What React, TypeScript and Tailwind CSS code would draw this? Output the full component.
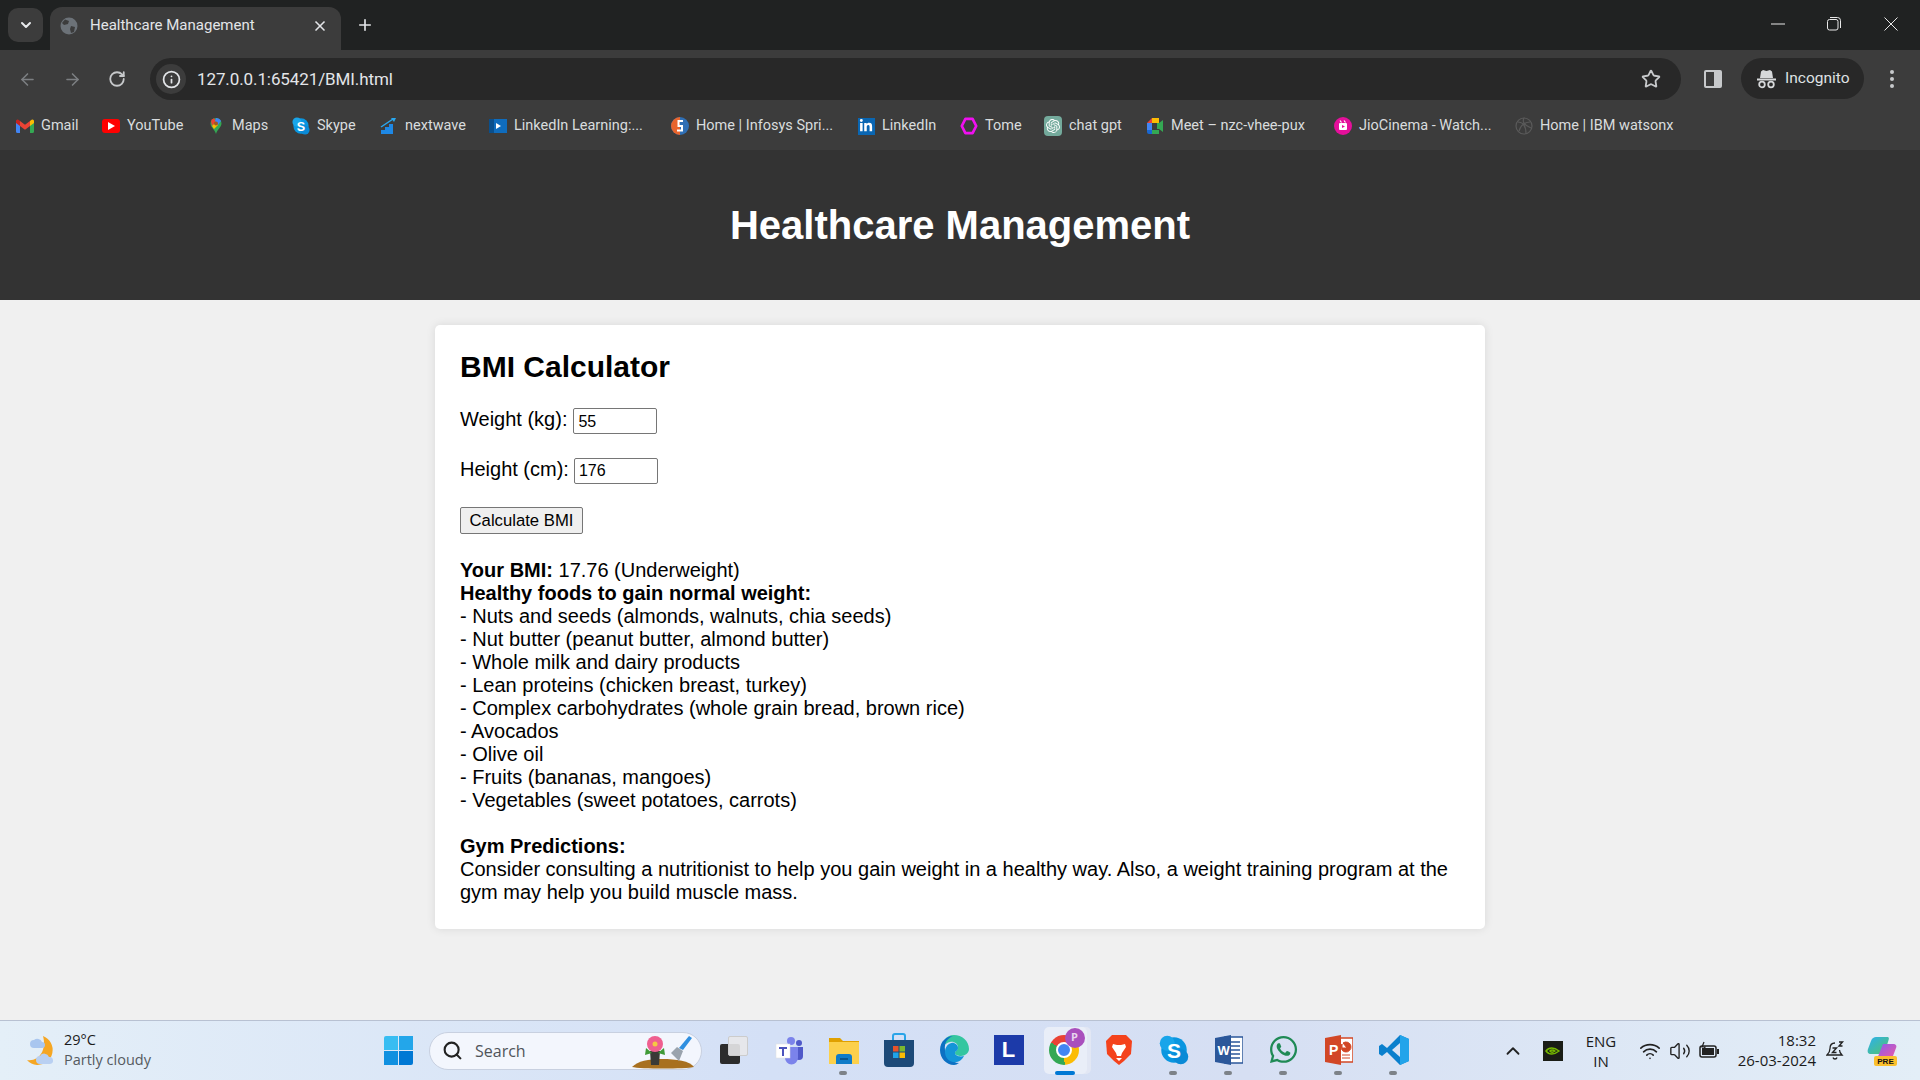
import React from "react";
import { FaWhatsapp, FaLinkedinIn } from "react-icons/fa";
import { SiOpenai } from "react-icons/si";
import { ChevronDown, X, Plus, ArrowLeft, ArrowRight, RotateCw, Info, Star, Search, ChevronUp, Wifi, Volume2 } from "lucide-react";

const chrome = "font-['Roboto','Noto_Sans',sans-serif]";

function Skype({ size }: { size: number }) {
  return (
    <svg width={size} height={size} viewBox="0 0 20 20">
      <circle cx="10" cy="10" r="8.500" fill="#0a96e0" />
      <circle cx="5.500" cy="5.500" r="5" fill="#19a5ea" />
      <circle cx="14.500" cy="14.500" r="5" fill="#0a8ad6" />
      <text x="10" y="15" textAnchor="middle" fontSize="14" fontWeight="bold" fill="#fff" fontFamily="Liberation Sans">S</text>
    </svg>
  );
}
function Gmail() {
  return (
    <svg width="18" height="14" viewBox="0 0 18 14">
      <path d="M0 2v10.500A1.500 1.500 0 0 0 1.500 14H4V6z" fill="#4285f4" />
      <path d="M18 2v10.500a1.500 1.500 0 0 1-1.500 1.500H14V6z" fill="#34a853" />
      <path d="M4 2v5l5 3.800L14 7V2L9 5.800z" fill="#ea4335" />
      <path d="M14 2l1.600-1.200A1.500 1.500 0 0 1 18 2v2l-4 3z" fill="#fbbc04" />
      <path d="M4 2 2.400.8A1.500 1.500 0 0 0 0 2v2l4 3z" fill="#c5221f" />
    </svg>
  );
}
function Maps() {
  return (
    <svg width="16" height="20" viewBox="0 0 16 18">
      <path d="M8 1a5.500 5.500 0 0 1 5.500 5.500C13.500 10 9.500 12 8 17c-1.500-5-5.500-7-5.500-10.500A5.500 5.500 0 0 1 8 1z" fill="#34a853" />
      <path d="M3 4a5.500 5.500 0 0 1 3-2.700L8 4 4 9z" fill="#ea4335" />
      <path d="M8 1a5.500 5.500 0 0 1 5 3l-3 4-3-4z" fill="#4285f4" />
      <path d="M4 9l4-4 2 3-4 4z" fill="#fbbc04" />
      <circle cx="8" cy="6.500" r="2" fill="#a5571f" />
    </svg>
  );
}
function Nextwave() {
  return (
    <svg width="19" height="20" viewBox="0 0 18 18">
      <path d="M1 17v-4h4v-3h4V7h4v10z" fill="#1e88e5" />
      <path d="M1 10 13 2" stroke="#29a8f0" strokeWidth="1.500" fill="none" />
      <path d="M11 1h5l-2 4z" fill="#29a8f0" />
    </svg>
  );
}
function LinkedInLearning() {
  return (
    <svg width="18" height="16" viewBox="0 0 18 16">
      <rect x="0" y="1" width="18" height="14" fill="#0f6cbd" />
      <rect x="0" y="1" width="5" height="14" fill="#0a4f8c" />
      <path d="M7 5l5 3-5 3z" fill="#fff" />
    </svg>
  );
}
function Infosys() {
  return (
    <svg width="18" height="20" viewBox="0 0 18 20">
      <circle cx="9" cy="10" r="9" fill="#2f6fb5" />
      <path d="M9 1a9 9 0 0 0 0 18z" fill="#e8642c" />
      <path d="M12 5H7.500v5H11v4.500H6" stroke="#fff" strokeWidth="2" fill="none" />
    </svg>
  );
}
function Tome() {
  return (
    <svg width="20" height="20" viewBox="0 0 20 20">
      <path d="M6 2h8l4 8-4 8H6l-4-8z" fill="none" stroke="#f010f0" strokeWidth="3" strokeLinejoin="round" />
    </svg>
  );
}
function Meet() {
  return (
    <svg width="18" height="18" viewBox="0 0 18 18">
      <path d="M6 1h7v5H6z" fill="#fbbc04" />
      <path d="M1 6l5-5v5z" fill="#ea4335" />
      <path d="M1 6h5v7H1z" fill="#4285f4" />
      <path d="M6 13h7v4H6z" fill="#34a853" />
      <path d="M1 13h5v4H3a2 2 0 0 1-2-2z" fill="#1967d2" />
      <path d="M6 6h7v7H6z" fill="#3c3c3c" />
      <path d="M11 6h2l4-3v12l-4-3h-2z" fill="#34a853" />
    </svg>
  );
}
function Jio() {
  return (
    <svg width="18" height="18" viewBox="0 0 18 18">
      <circle cx="9" cy="9" r="9" fill="#e5109b" />
      <rect x="5" y="6" width="8" height="7" rx="1" fill="#fff" />
      <path d="M6 3.500l1.500 2M10 3.500l1.500 2" stroke="#fff" strokeWidth="1.200" />
      <path d="M8 8l3 1.500L8 11z" fill="#e5109b" />
    </svg>
  );
}
function Watson() {
  return (
    <svg width="18" height="18" viewBox="0 0 18 18" fill="none" stroke="#5a5a5a" strokeWidth="1.200">
      <circle cx="9" cy="9" r="8" />
      <path d="M3 5c5 0 8 3 8 12M15 5c-5 0-9 3-11 9M9 1c-2 4 0 7 7 10" />
    </svg>
  );
}
function Globe({ size = 18 }: { size?: number }) {
  return (
    <svg width={size} height={size} viewBox="0 0 18 18">
      <circle cx="9" cy="9" r="8.500" fill="#6c7278" />
      <path d="M5 2.500 9 4l-1 3-4 1-2-2zM11 9l4 1-1 5-3 1-1-4z" fill="#3c3c3c" />
    </svg>
  );
}

function Bookmark({ w, icon, label }: { w: string; icon: React.ReactNode; label: string }) {
  return (
    <div className={`${w} flex items-center shrink-0 whitespace-nowrap`}>
      <span className="w-[18px] flex justify-center items-center shrink-0">{icon}</span>
      <span className="ml-[7px] text-[14.500px] text-[#d9dcde]">{label}</span>
    </div>
  );
}

function Bookmarks() {
  return (
    <div className={`h-[50px] flex items-center pl-[16px] pt-[2px] ${chrome}`}>
      <Bookmark w="w-[86px]" icon={<Gmail />} label="Gmail" />
      <Bookmark w="w-[105px]" icon={<span className="bg-[#f00] rounded-[3px] w-[18px] h-[14px] flex items-center justify-center"><svg width="7" height="8" viewBox="0 0 7 8"><path d="M0 0l7 4-7 4z" fill="#fff" /></svg></span>} label="YouTube" />
      <Bookmark w="w-[85px]" icon={<Maps />} label="Maps" />
      <Bookmark w="w-[88px]" icon={<Skype size={20} />} label="Skype" />
      <Bookmark w="w-[109px]" icon={<Nextwave />} label="nextwave" />
      <Bookmark w="w-[182px]" icon={<LinkedInLearning />} label="LinkedIn Learning:..." />
      <Bookmark w="w-[186px]" icon={<Infosys />} label="Home | Infosys Spri..." />
      <Bookmark w="w-[103px]" icon={<span className="bg-[#0a66b2] w-[17px] h-[17px] flex items-center justify-center"><FaLinkedinIn size={14} color="#fff" /></span>} label="LinkedIn" />
      <Bookmark w="w-[84px]" icon={<Tome />} label="Tome" />
      <Bookmark w="w-[102px]" icon={<span className="bg-[#74aa9c] rounded-[4px] w-[18px] h-[20px] flex items-center justify-center"><SiOpenai size={14} color="#fff" /></span>} label="chat gpt" />
      <Bookmark w="w-[188px]" icon={<Meet />} label="Meet – nzc-vhee-pux" />
      <Bookmark w="w-[181px]" icon={<Jio />} label="JioCinema - Watch..." />
      <Bookmark w="w-[170px]" icon={<Watson />} label="Home | IBM watsonx" />
    </div>
  );
}

function BrowserChrome() {
  return (
    <div className={`shrink-0 ${chrome}`}>
      <div className="h-[50px] bg-[#202222] flex relative">
        <div className="ml-[8px] mt-[8px] w-[35px] h-[34px] bg-[#3c3c3c] rounded-[10px] flex items-center justify-center">
          <ChevronDown size={16} strokeWidth={3} color="#e8eaed" />
        </div>
        <div className="ml-[7px] mt-[7px] w-[291px] h-[43px] bg-[#3c3c3c] rounded-t-[12px] flex items-center pl-[10px] pr-[13px] pb-[6px]">
          <Globe />
          <span className="ml-[12px] text-[15px] text-[#e3e5e8] flex-1">Healthcare Management</span>
          <X size={16} strokeWidth={2.500} color="#e3e5e8" />
        </div>
        <div className="ml-[15px] mt-[16px] h-[18px]">
          <Plus size={18} strokeWidth={2.200} color="#e3e5e8" />
        </div>
        <div className="ml-auto flex items-start">
          <div className="w-[56px] h-[48px] flex items-center justify-center">
            <svg width="14" height="2" viewBox="0 0 14 2"><path d="M0 1h14" stroke="#e8e8e8" strokeWidth="1" /></svg>
          </div>
          <div className="w-[56px] h-[48px] flex items-center justify-center">
            <svg width="14" height="14" viewBox="0 0 14 14" fill="none" stroke="#e8e8e8" strokeWidth="1"><rect x="0.500" y="2.500" width="10.500" height="10.500" rx="2" /><path d="M3 .5h7.500a3 3 0 0 1 3 3V11" /></svg>
          </div>
          <div className="w-[58px] h-[48px] flex items-center justify-center">
            <svg width="14" height="14" viewBox="0 0 14 14" stroke="#e8e8e8" strokeWidth="1"><path d="M.5.5l13 13M13.500.5l-13 13" /></svg>
          </div>
        </div>
      </div>
      <div className="bg-[#3c3c3c]">
        <div className="h-[50px] flex items-start pt-[8px] rounded-t-[10px]">
          <div className="w-[150px] h-[42px] flex items-center pl-[18px] gap-[26px] shrink-0">
            <ArrowLeft size={19} color="#7c7f82" />
            <ArrowRight size={19} color="#7c7f82" />
            <RotateCw size={18} strokeWidth={2.400} color="#c7c9cb" />
          </div>
          <div className="w-[1531px] h-[42px] bg-[#282828] rounded-full flex items-center pl-[6px] pr-[20px] shrink-0">
            <div className="w-[30px] h-[30px] rounded-full bg-[#3c3c3c] flex items-center justify-center">
              <Info size={19} strokeWidth={2.200} color="#e3e5e8" />
            </div>
            <span className="ml-[11px] text-[17px] text-[#e3e5e8] flex-1 tracking-[-0.1px] pt-[2px]">127.0.0.1:65421/BMI.html</span>
            <Star size={20} strokeWidth={2.200} color="#c7c9cb" />
          </div>
          <div className="w-[60px] h-[42px] flex items-center justify-center shrink-0 pl-[4px]">
            <svg width="18" height="18" viewBox="0 0 18 18"><rect x="0" y="0" width="18" height="18" rx="2" fill="#c7c9cb" /><rect x="2" y="2" width="8" height="14" fill="#3c3c3c" /></svg>
          </div>
          <div className="w-[123px] h-[41px] bg-[#282828] rounded-full flex items-center pl-[16px] shrink-0">
            <svg width="19" height="20" viewBox="0 0 19 20" fill="#d6d8da"><path d="M4 2.500 6 1l3.500 1L13 1l2 1.500L16 9H3z" /><rect x="0" y="9.500" width="19" height="2" /><circle cx="5" cy="15.500" r="2.800" fill="none" stroke="#d6d8da" strokeWidth="1.800" /><circle cx="14" cy="15.500" r="2.800" fill="none" stroke="#d6d8da" strokeWidth="1.800" /></svg>
            <span className="ml-[9px] text-[15.500px] text-[#dfe1e3]">Incognito</span>
          </div>
          <div className="w-[56px] h-[42px] flex items-center justify-center shrink-0">
            <svg width="4" height="18" viewBox="0 0 4 18" fill="#c7c9cb"><circle cx="2" cy="2" r="2" /><circle cx="2" cy="9" r="2" /><circle cx="2" cy="16" r="2" /></svg>
          </div>
        </div>
        <Bookmarks />
      </div>
    </div>
  );
}

function Page() {
  return (
    <div className="flex-1 bg-[#f0f0f0] font-['Liberation_Sans',Arial,sans-serif] text-black min-h-0">
      <header className="h-[150px] bg-[#333333] flex items-center justify-center">
        <h1 className="text-[40px] font-bold text-white leading-[46px]">Healthcare Management</h1>
      </header>
      <main className="mt-[25px] mx-auto w-[1050px] h-[604px] bg-white rounded-[5px] shadow-[0_0_10px_rgba(0,0,0,0.1)] px-[25px] pt-[25px] text-[20px] leading-[23px]">
        <h2 className="text-[30px] font-bold leading-[34px]">BMI Calculator</h2>
        <div className="mt-[24px] h-[26px] flex items-center">
          <label className="-mt-[3px]">Weight (kg):</label>
          <input readOnly value="55" className="ml-[6px] w-[84px] h-[26px] border border-[#767676] rounded-[2px] pl-[4px] pt-[1px] text-[16px] leading-none bg-white" />
        </div>
        <div className="mt-[24px] h-[26px] flex items-center">
          <label className="-mt-[3px]">Height (cm):</label>
          <input readOnly value="176" className="ml-[5px] w-[84px] h-[26px] border border-[#767676] rounded-[2px] pl-[4px] text-[16px] leading-none bg-white" />
        </div>
        <button className="block mt-[23px] w-[123px] h-[27px] bg-[#efefef] border border-[#767676] rounded-[2px] text-[16.700px] leading-none pt-[1px]">Calculate BMI</button>
        <div className="mt-[25px]">
          <p><b>Your BMI:</b> 17.76 (Underweight)</p>
          <p><b>Healthy foods to gain normal weight:</b></p>
          <p>- Nuts and seeds (almonds, walnuts, chia seeds)</p>
          <p>- Nut butter (peanut butter, almond butter)</p>
          <p>- Whole milk and dairy products</p>
          <p>- Lean proteins (chicken breast, turkey)</p>
          <p>- Complex carbohydrates (whole grain bread, brown rice)</p>
          <p>- Avocados</p>
          <p>- Olive oil</p>
          <p>- Fruits (bananas, mangoes)</p>
          <p>- Vegetables (sweet potatoes, carrots)</p>
          <p className="mt-[23px]"><b>Gym Predictions:</b></p>
          <p>Consider consulting a nutritionist to help you gain weight in a healthy way. Also, a weight training program at the gym may help you build muscle mass.</p>
        </div>
      </main>
    </div>
  );
}

function Slot({ children, dot, active }: { children: React.ReactNode; dot?: boolean; active?: boolean }) {
  return (
    <div className="w-[55px] h-[60px] flex items-center justify-center relative shrink-0">
      {active && <div className="absolute left-[8px] top-[6px] w-[43px] h-[47px] bg-[#e9eef8] rounded-[5px] shadow-[4px_0_0_#e2e7f4]" />}
      <div className="relative flex -mt-[2px]">{children}</div>
      {dot && <div className="absolute left-[23px] bottom-[6px] w-[8px] h-[4px] rounded-full bg-[#7d8288]" />}
      {active && <div className="absolute left-[19px] bottom-[6px] w-[20px] h-[4px] rounded-full bg-[#0078d4]" />}
    </div>
  );
}

function Taskbar() {
  return (
    <div className="h-[60px] shrink-0 border-t border-[#b8c1d2] bg-[linear-gradient(90deg,#e4eff8_0%,#d4e0f6_40%,#d6dff3_65%,#e3eef7_100%)] flex items-center font-['Open_Sans','Noto_Sans',sans-serif] text-[#1b1b1b]">
      <div className="w-[372px] shrink-0 flex items-center pl-[24px]">
        <svg width="34" height="36" viewBox="0 0 32 36">
          <path d="M18 3a15 15 0 0 1-6 29 14 14 0 0 1-10-5c12 2 20-10 16-24z" fill="#f5a623" />
          <path d="M9 15a4 4 0 0 1 0-8 5 5 0 0 1 8 2 3 3 0 0 1 0 6z" fill="#a9c6ef" />
          <path d="M15 31a4 4 0 0 1 0-8 5 5 0 0 1 9 1 3.500 3.500 0 0 1 1 7z" fill="#b9d0f2" />
        </svg>
        <div className="ml-[6px] text-[14.500px] leading-[20px] -mt-[2px]">
          <div>29°C</div>
          <div className="text-[#555a60]">Partly cloudy</div>
        </div>
      </div>
      <div className="w-[52px] flex justify-center shrink-0">
        <div className="grid grid-cols-2 gap-[1px] w-[29px] h-[29px]">
          <div className="bg-[#38bdf2] rounded-tl-[2px]" />
          <div className="bg-[#23a6ea]" />
          <div className="bg-[#1090e0]" />
          <div className="bg-[#0078d4] rounded-br-[2px]" />
        </div>
      </div>
      <div className="w-[273px] h-[38px] ml-[5px] rounded-full bg-[#f3f6fd] border border-[#c8d0e0] flex items-center pl-[12px] pr-[6px] shrink-0 relative">
        <Search size={21} strokeWidth={2.400} color="#222" />
        <span className="ml-[12px] text-[16px] text-[#50545a]">Search</span>
        <svg className="ml-auto" width="64" height="36" viewBox="0 0 64 36">
          <path d="M1 34c6-6 16-8 30-8s28 2 32 8c-8 2-54 2-62 0z" fill="#a8701f" />
          <path d="M19 18h10l-1 14h-8z" fill="#3a3a36" />
          <path d="M15 15l6 5-7 2zM33 15l-6 5 7 2z" fill="#3f9a37" />
          <circle cx="24" cy="11" r="8" fill="#ef5f8f" />
          <circle cx="24" cy="11" r="2.500" fill="#f5c842" />
          <path d="M40 20l6-6 6 4-4 10z" fill="#9aa3ad" />
          <path d="M48 15 58 3l3 2-9 12z" fill="#2f8fe0" />
        </svg>
      </div>
      <div className="w-[4px] shrink-0" />
      <Slot>
        <div className="relative w-[28px] h-[28px]">
          <div className="absolute left-0 bottom-0 w-[20px] h-[20px] bg-[#2c2c2c] rounded-[2px]" />
          <div className="absolute right-0 top-0 w-[20px] h-[20px] bg-[#e8e8ea]/90 rounded-[2px] border border-[#ccc]" />
        </div>
      </Slot>
      <Slot>
        <svg width="30" height="30" viewBox="0 0 30 30">
          <circle cx="17" cy="6" r="4" fill="#7b83eb" />
          <circle cx="25" cy="8" r="3" fill="#5059c9" />
          <path d="M21 12h8v9a4 4 0 0 1-8 0z" fill="#5059c9" />
          <path d="M11 12h13v11a6 6 0 0 1-13 0z" fill="#7b83eb" />
          <rect x="2" y="9" width="14" height="14" fill="#fff" stroke="#ddd" strokeWidth="0.500" />
          <path d="M5 12h8v2h-3v7H8v-7H5z" fill="#4b53bc" />
        </svg>
      </Slot>
      <Slot dot>
        <svg width="32" height="30" viewBox="0 0 32 30">
          <path d="M1 3h11l3 3h16v6H1z" fill="#e0a000" />
          <path d="M1 7h30v22H1z" fill="#fcd04b" />
          <path d="M8 22a3 3 0 0 1 3-3h10a3 3 0 0 1 3 3v7H8z" fill="#0f7bc8" />
          <path d="M12 24h8" stroke="#07497e" strokeWidth="1.500" />
        </svg>
      </Slot>
      <Slot>
        <svg width="30" height="34" viewBox="0 0 30 34">
          <path d="M9 8V3a2 2 0 0 1 2-2h8a2 2 0 0 1 2 2v5" fill="none" stroke="#2aa4e8" strokeWidth="2" />
          <path d="M0 7h30v23a4 4 0 0 1-4 4H4a4 4 0 0 1-4-4z" fill="#1d4a78" />
          <rect x="9" y="13" width="5.500" height="5.500" fill="#e8532b" />
          <rect x="15.500" y="13" width="5.500" height="5.500" fill="#7cb82f" />
          <rect x="9" y="19.500" width="5.500" height="5.500" fill="#1fa3e8" />
          <rect x="15.500" y="19.500" width="5.500" height="5.500" fill="#fbbc04" />
        </svg>
      </Slot>
      <Slot>
        <svg width="30" height="30" viewBox="0 0 30 30">
          <path d="M15 0c8 0 15 6 15 14 0 4-4 7-8 7-3 0-6-1-6-3 0-2 3-2 3-6 0-3-4-6-8-5-5 1-9 6-9 11C2 7 7 0 15 0z" fill="#34c6a0" />
          <path d="M1 15C1 6 8 1 14 1c-5 2-9 6-8 14 1 6 7 13 14 13-2 1-3 2-5 2C7 30 1 23 1 15z" fill="#0c71c3" />
          <path d="M6 17c0-6 5-10 9-9 3 1 4 3 4 5 0 3-3 3-3 5 0 3 5 4 9 3-2 4-6 7-11 6-5-1-8-5-8-10z" fill="#1495d8" />
        </svg>
      </Slot>
      <Slot>
        <div className="w-[30px] h-[30px] bg-[#1c3aa9] flex items-center justify-center text-white font-bold text-[22px] leading-none font-['Liberation_Sans',sans-serif]">L</div>
      </Slot>
      <Slot active>
        <div className="relative w-[30px] h-[30px]">
          <div className="w-[30px] h-[30px] rounded-full bg-[conic-gradient(from_300deg,#ea4335_0_33%,#fbbc04_33%_66%,#34a853_66%_100%)] flex items-center justify-center">
            <div className="w-[16px] h-[16px] rounded-full bg-[#4285f4] border-2 border-white" />
          </div>
          <div className="absolute -right-[6px] -top-[7px] w-[20px] h-[20px] rounded-full bg-[#a94fbd] text-[#e8d4ee] text-[11px] font-bold flex items-center justify-center">P</div>
        </div>
      </Slot>
      <Slot>
        <svg width="26" height="30" viewBox="0 0 26 30">
          <path d="M6 0h14l3 3 3 3-1 13-7 7-5 4-5-4-7-7L0 6l3-3z" fill="#f4421c" />
          <path d="M7 9l4 1h4l4-1 1 3-4 6-1 3h-4l-1-3-4-6zM10 23h6l-3 3z" fill="#fff" />
        </svg>
      </Slot>
      <Slot dot><Skype size={30} /></Slot>
      <Slot dot>
        <svg width="28" height="30" viewBox="0 0 28 30">
          <rect x="10" y="2" width="18" height="26" fill="#fff" stroke="#2b579a" strokeWidth="1.500" />
          <path d="M16 7h9M16 11h9M16 15h9M16 19h9M16 23h9" stroke="#2b579a" strokeWidth="1.500" />
          <path d="M0 3 16 0v30L0 27z" fill="#2b579a" />
          <text x="2.500" y="20" fontSize="13" fontWeight="bold" fill="#fff" fontFamily="Liberation Sans">W</text>
        </svg>
      </Slot>
      <Slot dot><FaWhatsapp size={31} color="#1f8a55" /></Slot>
      <Slot dot>
        <svg width="28" height="30" viewBox="0 0 28 30">
          <rect x="10" y="3" width="18" height="24" fill="#fff" stroke="#d24726" strokeWidth="1.500" />
          <path d="M18 8a5 5 0 1 1-1 1v4h5zM17 20h8M17 23h8" fill="#d24726" stroke="#d24726" strokeWidth="1" />
          <path d="M0 3 16 0v30L0 27z" fill="#d24726" />
          <text x="4" y="20" fontSize="14" fontWeight="bold" fill="#fff" fontFamily="Liberation Sans">P</text>
        </svg>
      </Slot>
      <Slot dot>
        <svg width="30" height="30" viewBox="0 0 30 30">
          <path d="M21 0l9 4v22l-9 4L8 17l-5 4-3-2V11l3-2 5 4z" fill="#0a7fcd" />
          <path d="M21 0l9 4v22l-9 4z" fill="#22a4ea" />
          <path d="M21 8v14l-8-7z" fill="#d9e3f5" />
        </svg>
      </Slot>
      <div className="w-[81px] shrink-0" />
      <ChevronUp size={22} strokeWidth={2} color="#222" className="shrink-0" />
      <div className="w-[19px] shrink-0" />
      <div className="w-[20px] h-[20px] bg-[#1a1d16] flex items-center justify-center shrink-0">
        <svg width="16" height="10" viewBox="0 0 16 10" fill="none" stroke="#76b900" strokeWidth="1.500"><path d="M1 5c3-4 8-4 13 0-5 4-10 4-13 0zM5 5c1-1.500 3-1.500 5 0-2 1.500-4 1.500-5 0z" /></svg>
      </div>
      <div className="w-[76px] shrink-0 text-center text-[15px] leading-[20px]">
        <div>ENG</div>
        <div>IN</div>
      </div>
      <Wifi size={22} strokeWidth={1.800} color="#222" className="shrink-0" />
      <div className="w-[8px] shrink-0" />
      <Volume2 size={22} strokeWidth={1.500} color="#222" className="shrink-0" />
      <div className="w-[8px] shrink-0" />
      <svg width="20" height="20" viewBox="0 0 20 20" fill="none" className="shrink-0">
        <rect x="1" y="5" width="16" height="11" rx="2" stroke="#222" strokeWidth="1.500" />
        <rect x="3" y="7" width="12" height="7" fill="#222" />
        <rect x="18" y="8" width="2" height="5" fill="#222" />
        <path d="M5 1 3 6h3l-1 3" stroke="#222" strokeWidth="1.200" />
      </svg>
      <div className="w-[97px] shrink-0 text-right text-[15px] leading-[20px] -mt-[1px]">
        <div>18:32</div>
        <div>26-03-2024</div>
      </div>
      <div className="w-[10px] shrink-0" />
      <svg width="20" height="22" viewBox="0 0 20 22" fill="none" stroke="#222" strokeWidth="1.300" className="shrink-0">
        <path d="M9 3c-3.500 0-5 2.500-5 5.500 0 3-1.500 5-3 6.500h15c-1.500-1.500-2.500-3-2.500-5" />
        <path d="M7 17.500c.5 2 3.500 2 4 0" />
        <path d="M6.500 8h4l-4 4.500h4M13 2h3.500l-3.500 4h3.500" strokeWidth="1.400" />
      </svg>
      <div className="w-[21px] shrink-0" />
      <svg width="30" height="30" viewBox="0 0 30 30" className="shrink-0">
        <defs>
          <linearGradient id="cpa" x1="0" y1="0" x2="1" y2="1"><stop offset="0" stopColor="#2bb0f0" /><stop offset="1" stopColor="#55c46a" /></linearGradient>
          <linearGradient id="cpb" x1="0" y1="0" x2="1" y2="1"><stop offset="0" stopColor="#8a5cf0" /><stop offset="1" stopColor="#f05aa0" /></linearGradient>
        </defs>
        <path d="M9 1h11c3 0 2 2 0 8l-3 9H4c-3 0-4-2-3-5l3-8c1-3 3-4 5-4z" fill="url(#cpa)" />
        <path d="M16 8h10c3 0 4 2 3 4l-3 8c-1 2-2 3-5 3H10z" fill="url(#cpb)" />
        <rect x="7" y="20" width="23" height="10" rx="2" fill="#fbc02d" />
        <text x="18.500" y="28" textAnchor="middle" fontSize="8" fontWeight="bold" fill="#111" fontFamily="Liberation Sans">PRE</text>
      </svg>
    </div>
  );
}

export default function App() {
  return (
    <div className="w-[1920px] h-[1080px] flex flex-col overflow-hidden">
      <BrowserChrome />
      <Page />
      <Taskbar />
    </div>
  );
}
